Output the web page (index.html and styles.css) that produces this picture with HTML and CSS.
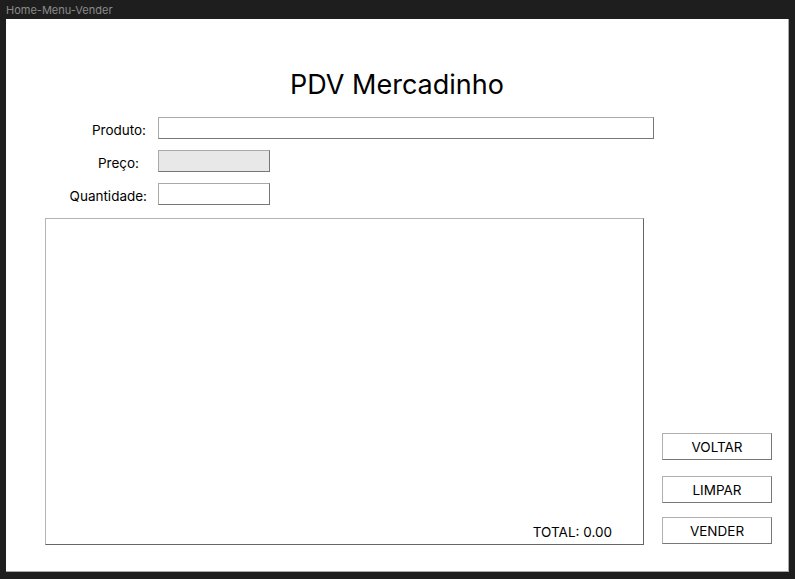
FILE: index.html
```html
<!DOCTYPE html>
<html lang="pt">
<head>
<meta charset="utf-8">
<title>Home-Menu-Vender</title>
<link rel="stylesheet" href="styles.css">
</head>
<body>
<div class="frame-label">Home-Menu-Vender</div>
<div class="frame">
  <h1 class="title">PDV Mercadinho</h1>
  <div class="form">
    <label class="lbl lbl-produto">Produto:</label>
    <div class="field field-wide"></div>
    <label class="lbl lbl-preco">Preço:</label>
    <div class="field field-short field-disabled"></div>
    <label class="lbl">Quantidade:</label>
    <div class="field field-short"></div>
  </div>
  <div class="main">
    <div class="list">
      <div class="total">TOTAL: 0.00</div>
    </div>
    <div class="actions">
      <div class="btn btn-voltar">VOLTAR</div>
      <div class="btn btn-limpar">LIMPAR</div>
      <div class="btn">VENDER</div>
    </div>
  </div>
</div>
</body>
</html>
```

FILE: styles.css
```css
html, body {
  margin: 0;
  padding: 0;
  background: #1e1e1e;
  font-family: Inter, "Noto Sans", sans-serif;
}

.frame-label {
  height: 17px;
  padding-top: 2px;
  line-height: 17px;
  padding-left: 6px;
  font-size: 11px;
  color: #8a8a8a;
}

.frame {
  margin-left: 6px;
  width: 782px;
  height: 552px;
  background: #ffffff;
  border-right: 1px solid #a8a8a8;
  border-bottom: 1px solid #a8a8a8;
  display: flex;
  flex-direction: column;
}

.title {
  margin: 48px 0 0 0;
  height: 34px;
  line-height: 36px;
  text-align: center;
  font-weight: 400;
  font-size: 27px;
  color: #000;
}

.form {
  margin-top: 16px;
  display: grid;
  grid-template-columns: 141px auto;
  column-gap: 11px;
  row-gap: 11px;
  justify-items: start;
}

.lbl {
  justify-self: end;
  font-size: 13.5px;
  height: 22px;
  box-sizing: border-box;
  padding-top: 4px;
  line-height: 18px;
  color: #000;
}

.lbl-produto { margin-right: 1px; }
.lbl-preco { margin-right: 8px; }

.field {
  height: 22px;
  box-sizing: border-box;
  border: 1px solid #777;
  border-top-color: #a9a9a9;
  border-left-color: #a9a9a9;
  background: #fff;
}

.field-wide { width: 496px; }
.field-short { width: 112px; }
.field-disabled { background: #e8e8e8; }

.main {
  margin-top: 13px;
  margin-left: 39px;
  display: flex;
  align-items: flex-end;
  gap: 18px;
}

.list {
  width: 599px;
  height: 327px;
  box-sizing: border-box;
  border: 1px solid #666;
  border-top-color: #b5b5b5;
  border-left-color: #b5b5b5;
  display: flex;
  align-items: flex-end;
  justify-content: flex-end;
  padding: 0 31px 4px 0;
}

.total {
  font-size: 13.5px;
  line-height: 16px;
  color: #000;
}

.actions {
  display: flex;
  flex-direction: column;
  padding-bottom: 1px;
}

.btn {
  width: 110px;
  height: 27px;
  box-sizing: border-box;
  border: 1px solid #777;
  border-top-color: #b0b0b0;
  border-left-color: #b0b0b0;
  display: flex;
  align-items: center;
  justify-content: center;
  font-size: 13.5px;
  color: #000;
}

.btn-voltar { margin-bottom: 16px; }
.btn-limpar { margin-bottom: 14px; }
```
